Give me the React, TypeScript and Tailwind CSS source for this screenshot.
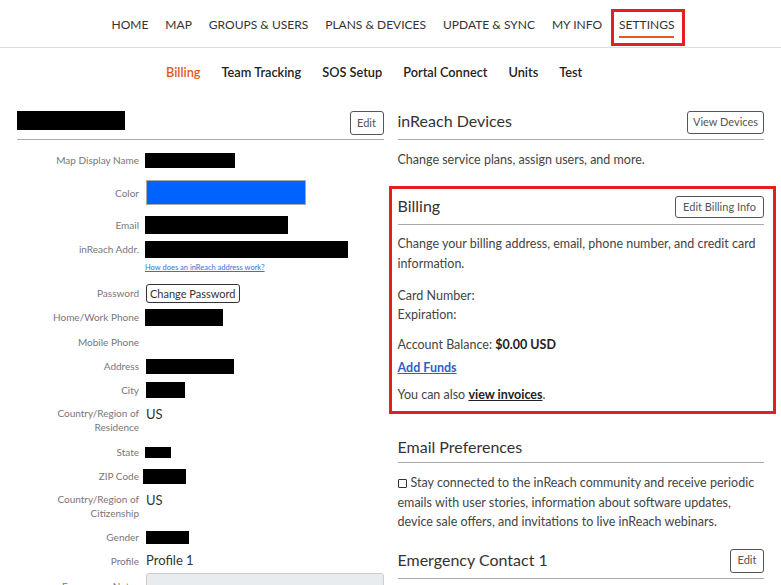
import React from "react";

const topNav = ["HOME", "MAP", "GROUPS & USERS", "PLANS & DEVICES", "UPDATE & SYNC", "MY INFO"];
const subNav = ["Team Tracking", "SOS Setup", "Portal Connect", "Units", "Test"];

function Redact({ w, h }: { w: string; h: string }) {
  return <div className={`bg-black ${w} ${h}`} />;
}

function Row({
  label,
  children,
  h = "h-[24px]",
}: {
  label: React.ReactNode;
  children?: React.ReactNode;
  h?: string;
}) {
  return (
    <div className={`flex items-center ${h}`}>
      <div className="w-[122px] shrink-0 text-right text-[10px] text-[#777] leading-[14px]">{label}</div>
      <div className="pl-[6px] flex items-center">{children}</div>
    </div>
  );
}

function SmallButton({ children, className = "" }: { children: React.ReactNode; className?: string }) {
  return (
    <button
      className={`border border-[#555] rounded-[3px] text-[11px] text-[#555] flex items-center justify-center bg-white whitespace-nowrap ${className}`}
    >
      {children}
    </button>
  );
}

export default function App() {
  return (
    <div className="font-['Lato',sans-serif] bg-white w-[781px] min-h-[585px] text-[#444]">
      {/* top nav */}
      <div className="h-[48px] border-b border-[#ddd] flex justify-center gap-[1px] pt-[9px] pl-[8px]">
        {topNav.map((item) => (
          <div key={item} className="border-[3px] border-transparent px-[5px] h-[37px]">
            <div className="pt-[4px] leading-[18px] text-[12px] text-[#333]">{item}</div>
          </div>
        ))}
        <div className="border-[3px] border-[#e31e24] pl-[5px] pr-[8px] h-[37px]">
          <div className="pt-[4px] leading-[18px] text-[12px] text-[#333]">SETTINGS</div>
          <div className="mt-[2px] h-[2px] bg-[#f0561f]" />
        </div>
      </div>

      {/* sub nav */}
      <div className="h-[50px] flex items-center pl-[166px] gap-[21px] text-[12.75px] font-semibold text-[#222]">
        <span className="text-[#dc5a1e]">Billing</span>
        {subNav.map((s) => (
          <span key={s}>{s}</span>
        ))}
      </div>

      <div className="grid grid-cols-2 gap-[14px] px-[17px] pt-[13px]">
        {/* left column */}
        <div>
          <div className="flex justify-between items-start pb-[4px] border-b border-[#aaa]">
            <Redact w="w-[108px]" h="h-[19px]" />
            <SmallButton className="w-[34px] h-[24px]">Edit</SmallButton>
          </div>
          <div className="mt-[8px]">
            <Row label="Map Display Name">
              <Redact w="w-[90px]" h="h-[15px]" />
            </Row>
            <Row label="Color" h="h-[41px]">
              <div className="ml-[1px] w-[160px] h-[25px] bg-[#0062ff] border border-[#aaa]" />
            </Row>
            <Row label="Email">
              <Redact w="w-[143px]" h="h-[18px]" />
            </Row>
            <Row label="inReach Addr.">
              <Redact w="w-[203px]" h="h-[17px]" />
            </Row>
            <div className="h-[20px] pl-[128px]">
              <a className="text-[7.5px] text-[#3b6fd0] underline leading-[14px] block">
                How does an inReach address work?
              </a>
            </div>
            <Row label="Password">
              <button className="ml-[1px] h-[19px] px-[3px] border border-[#333] rounded-[3px] text-[11px] text-[#333] leading-none whitespace-nowrap">
                Change Password
              </button>
            </Row>
            <Row label="Home/Work Phone">
              <Redact w="w-[78px]" h="h-[17px]" />
            </Row>
            <Row label="Mobile Phone" h="h-[25px]" />
            <Row label="Address">
              <div className="ml-[1px]">
                <Redact w="w-[88px]" h="h-[15px]" />
              </div>
            </Row>
            <Row label="City">
              <div className="ml-[1px]">
                <Redact w="w-[39px]" h="h-[16px]" />
              </div>
            </Row>
            <div className="flex h-[38px] pt-[4px]">
              <div className="w-[122px] shrink-0 text-right text-[10px] text-[#777] leading-[14px]">
                Country/Region of
                <br />
                Residence
              </div>
              <div className="pl-[7px] text-[13px] text-[#333] leading-[16px]">US</div>
            </div>
            <Row label="State">
              <Redact w="w-[26px]" h="h-[11px]" />
            </Row>
            <Row label="ZIP Code">
              <div className="-ml-[2px]">
                <Redact w="w-[43px]" h="h-[15px]" />
              </div>
            </Row>
            <div className="flex h-[37px] pt-[4px]">
              <div className="w-[122px] shrink-0 text-right text-[10px] text-[#777] leading-[14px]">
                Country/Region of
                <br />
                Citizenship
              </div>
              <div className="pl-[7px] text-[13px] text-[#333] leading-[16px]">US</div>
            </div>
            <Row label="Gender">
              <div className="ml-[1px]">
                <Redact w="w-[43px]" h="h-[13px]" />
              </div>
            </Row>
            <Row label="Profile">
              <span className="ml-[1px] text-[13px] text-[#333]">Profile 1</span>
            </Row>
            <div className="flex">
              <div className="w-[122px] shrink-0 text-right text-[10px] text-[#777] leading-[14px] pt-[6px]">
                Emergency Notes
              </div>
              <div className="pl-[7px] flex-1">
                <div className="h-[60px] bg-[#e9ecef] border border-[#ccc] rounded-[3px]" />
              </div>
            </div>
          </div>
        </div>

        {/* right column */}
        <div>
          <div className="flex justify-between items-center pb-[5px] border-b border-[#aaa]">
            <h2 className="text-[16px] text-[#333] leading-[22px] -mt-[3px]">inReach Devices</h2>
            <SmallButton className="w-[77px] h-[23px]">View Devices</SmallButton>
          </div>
          <p className="mt-[10px] text-[12.5px] leading-[20px]">Change service plans, assign users, and more.</p>

          <div className="mt-[16px] -ml-[9px] -mr-[12px] border-[3px] border-[#e31e24] pl-[6px] pr-[9px] pt-[7px] pb-[7px]">
            <div className="flex justify-between items-center pb-[6px] border-b border-[#aaa]">
              <h2 className="text-[16px] text-[#333] leading-[20px] -mt-[2px]">Billing</h2>
              <SmallButton className="w-[89px] h-[22px]">Edit Billing Info</SmallButton>
            </div>
            <p className="mt-[9px] text-[12.5px] leading-[20px]">
              Change your billing address, email, phone number, and credit card information.
            </p>
            <div className="mt-[12px] text-[12.5px] leading-[19px]">
              <div>Card Number:</div>
              <div>Expiration:</div>
            </div>
            <div className="mt-[11px] text-[12.5px] leading-[19px]">
              Account Balance: <span className="font-bold text-[#222]">$0.00 USD</span>
            </div>
            <div className="mt-[4px] text-[12.5px] leading-[19px]">
              <a className="text-[#2f5fc4] font-bold underline">Add Funds</a>
            </div>
            <div className="mt-[8px] text-[12.5px] leading-[19px]">
              You can also <a className="font-bold text-[#222] underline">view invoices</a>.
            </div>
          </div>

          <div className="mt-[23px] pb-[5px] border-b border-[#aaa]">
            <h2 className="text-[16px] text-[#333] leading-[20px]">Email Preferences</h2>
          </div>
          <p className="mt-[10px] text-[12.5px] leading-[19.5px]">
            <span className="inline-block w-[9px] h-[9px] border border-[#333] rounded-[1px] mr-[4px] align-[-1px]" />
            Stay connected to the inReach community and receive periodic emails with user stories, information
            about software updates, device sale offers, and invitations to live inReach webinars.
          </p>

          <div className="mt-[17px] flex justify-between items-center pb-[5px] border-b border-[#aaa]">
            <h2 className="text-[16px] text-[#333] leading-[22px] -mt-[2px]">Emergency Contact 1</h2>
            <SmallButton className="w-[34px] h-[24px]">Edit</SmallButton>
          </div>
          <div className="h-[40px]" />
        </div>
      </div>
    </div>
  );
}
